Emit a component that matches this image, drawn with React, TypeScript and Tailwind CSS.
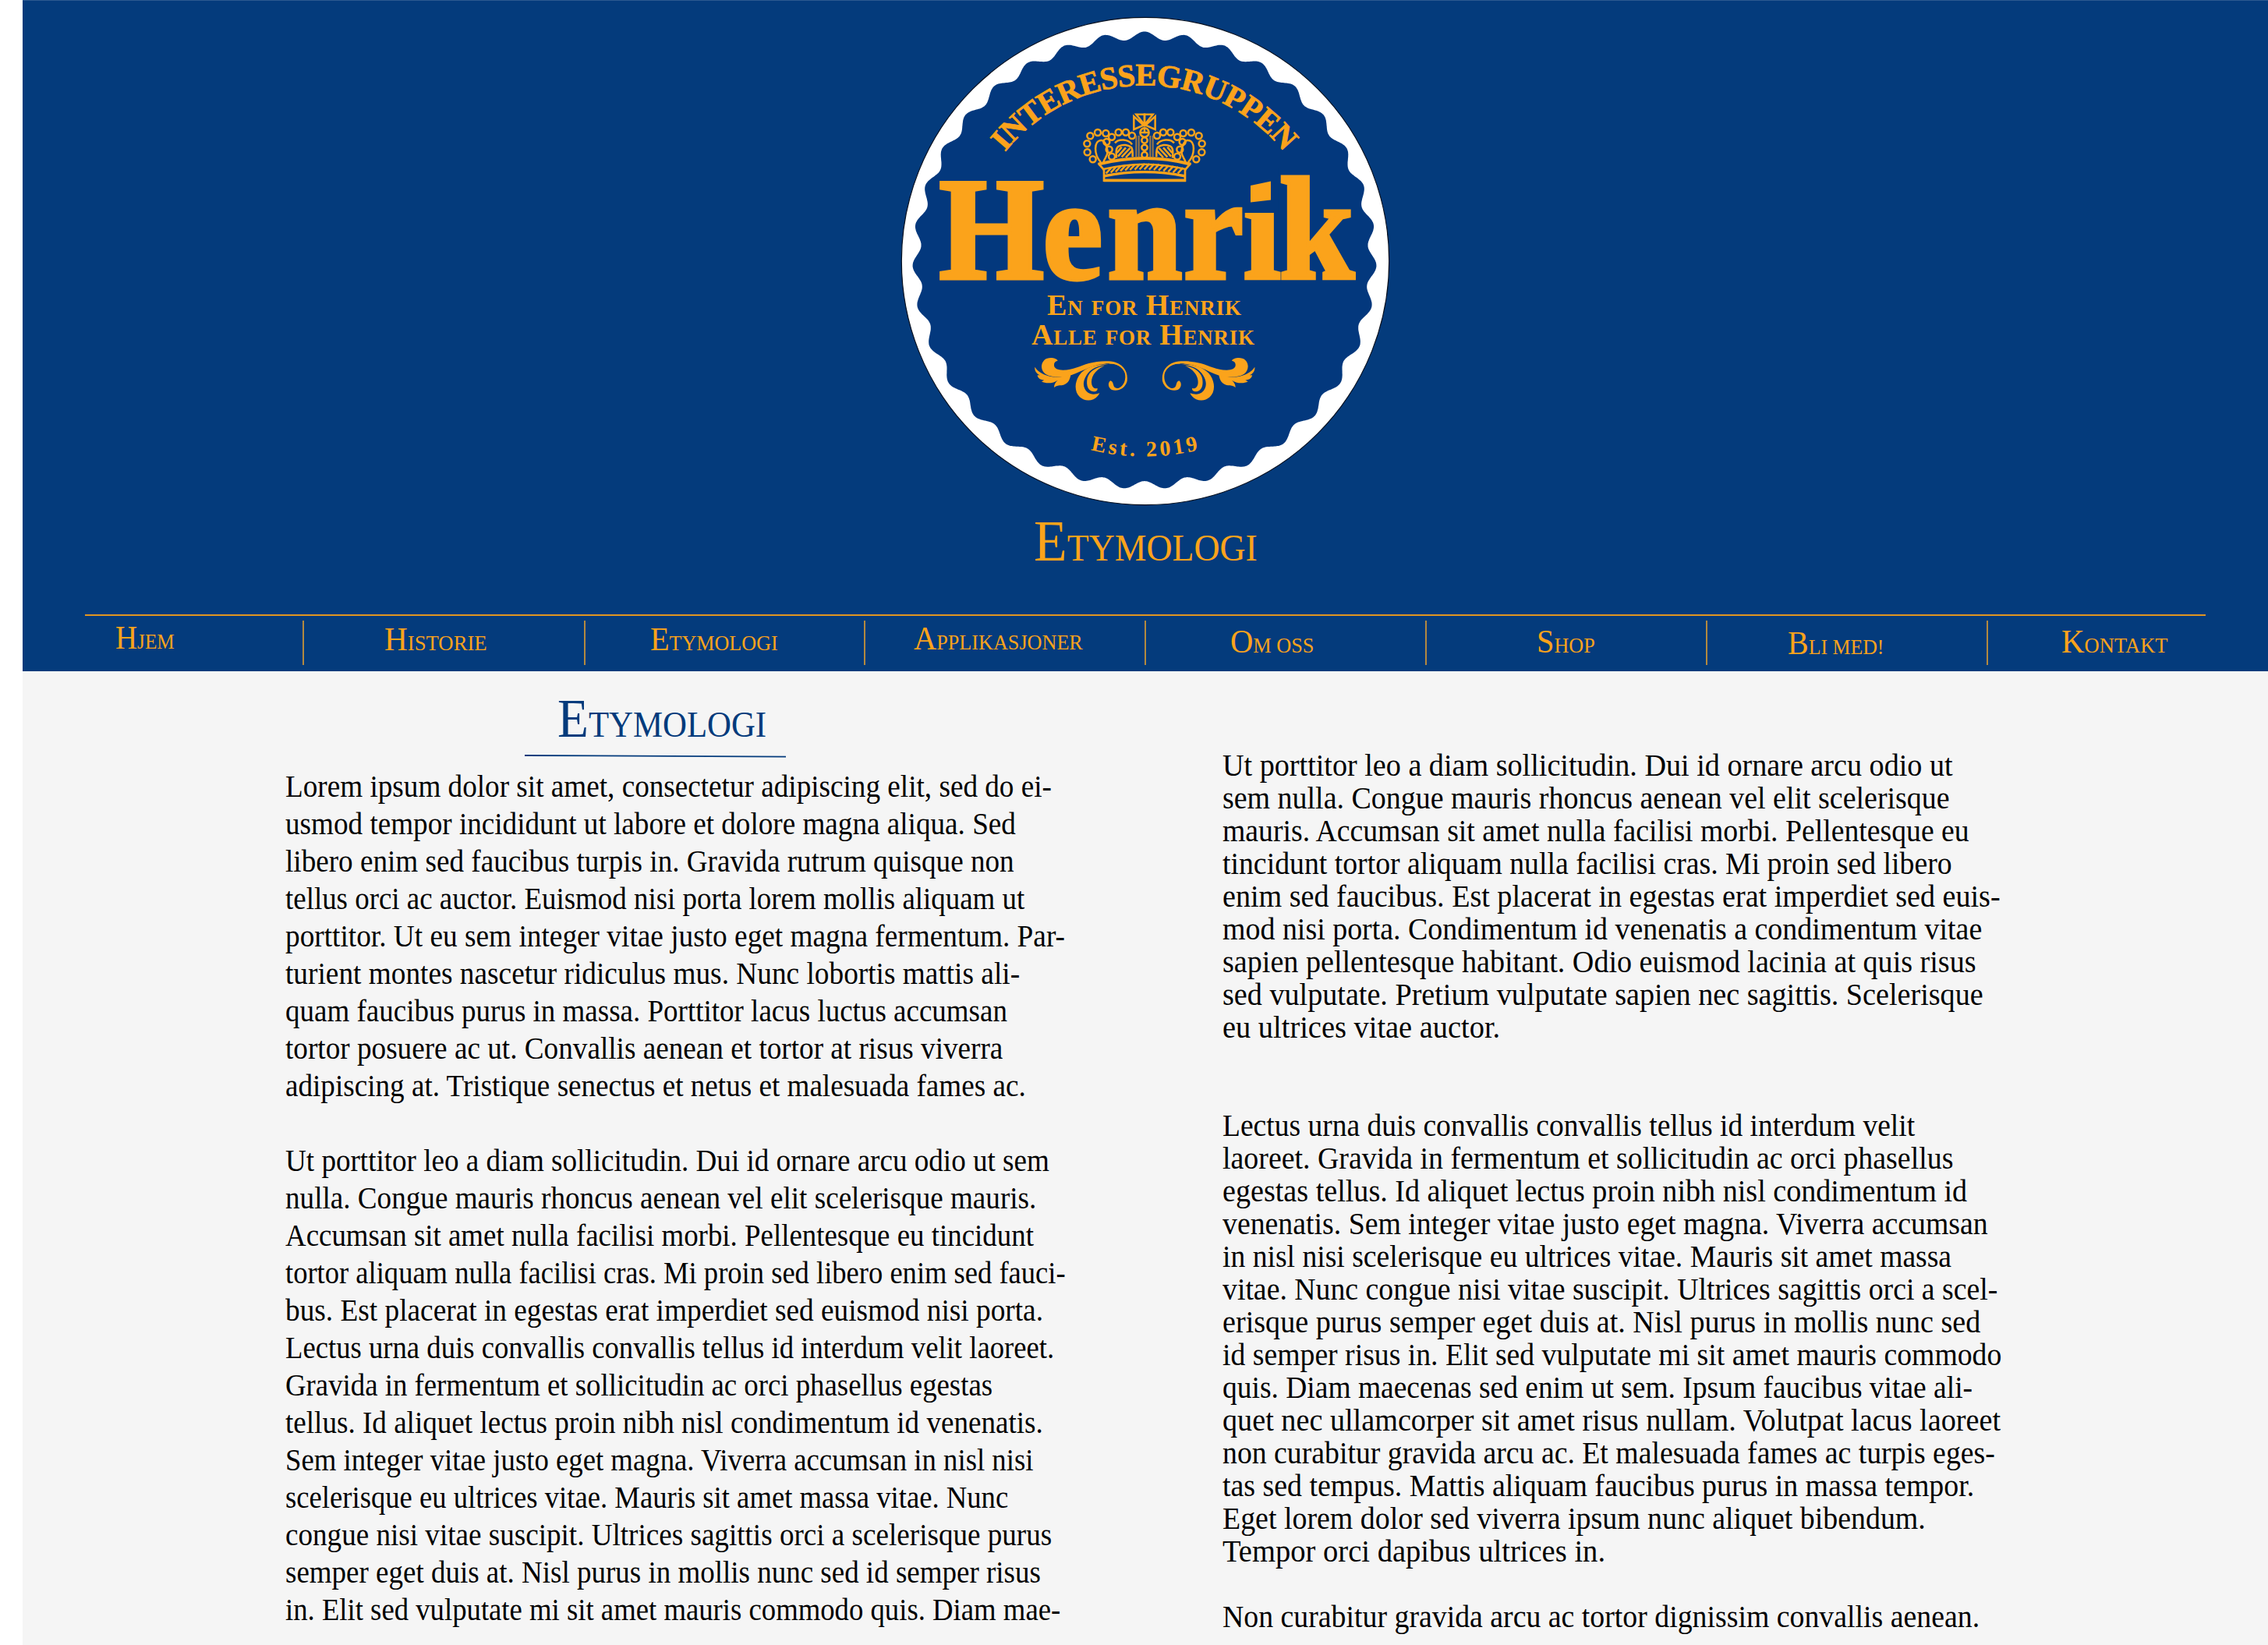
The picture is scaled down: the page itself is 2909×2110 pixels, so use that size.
import { useLayoutEffect, useRef, useState } from "react";

const ORANGE = "#fba31b";
const NAVY = "#03387d";

type FitProps = { text: string; width: number; className?: string };

/** One line of type, condensed or expanded to an exact measure. */
function Fit({ text, width, className = "" }: FitProps) {
  const ref = useRef<HTMLSpanElement>(null);
  const [scale, setScale] = useState(1);
  useLayoutEffect(() => {
    if (ref.current) setScale(width / ref.current.offsetWidth);
  }, [text, width]);
  return (
    <span
      ref={ref}
      className={`inline-block origin-left whitespace-pre ${className}`}
      style={{ transform: `scaleX(${scale})` }}
    >
      {text}
    </span>
  );
}

type Line = [string, number];

const leftColumn: Line[][] = [
  [
    ["Lorem ipsum dolor sit amet, consectetur adipiscing elit, sed do ei-", 983],
    ["usmod tempor incididunt ut labore et dolore magna aliqua. Sed", 937],
    ["libero enim sed faucibus turpis in. Gravida rutrum quisque non", 935],
    ["tellus orci ac auctor. Euismod nisi porta lorem mollis aliquam ut", 948],
    ["porttitor. Ut eu sem integer vitae justo eget magna fermentum. Par-", 1000],
    ["turient montes nascetur ridiculus mus. Nunc lobortis mattis ali-", 942],
    ["quam faucibus purus in massa. Porttitor lacus luctus accumsan", 926],
    ["tortor posuere ac ut. Convallis aenean et tortor at risus viverra", 920],
    ["adipiscing at. Tristique senectus et netus et malesuada fames ac.", 950],
  ],
  [
    ["Ut porttitor leo a diam sollicitudin. Dui id ornare arcu odio ut sem", 980],
    ["nulla. Congue mauris rhoncus aenean vel elit scelerisque mauris.", 963],
    ["Accumsan sit amet nulla facilisi morbi. Pellentesque eu tincidunt", 960],
    ["tortor aliquam nulla facilisi cras. Mi proin sed libero enim sed fauci-", 1001],
    ["bus. Est placerat in egestas erat imperdiet sed euismod nisi porta.", 972],
    ["Lectus urna duis convallis convallis tellus id interdum velit laoreet.", 986],
    ["Gravida in fermentum et sollicitudin ac orci phasellus egestas", 907],
    ["tellus. Id aliquet lectus proin nibh nisl condimentum id venenatis.", 972],
    ["Sem integer vitae justo eget magna. Viverra accumsan in nisl nisi", 959],
    ["scelerisque eu ultrices vitae. Mauris sit amet massa vitae. Nunc", 927],
    ["congue nisi vitae suscipit. Ultrices sagittis orci a scelerisque purus", 983],
    ["semper eget duis at. Nisl purus in mollis nunc sed id semper risus", 969],
    ["in. Elit sed vulputate mi sit amet mauris commodo quis. Diam mae-", 994],
  ],
];

const rightColumn: Line[][] = [
  [
    ["Ut porttitor leo a diam sollicitudin. Dui id ornare arcu odio ut", 937],
    ["sem nulla. Congue mauris rhoncus aenean vel elit scelerisque", 933],
    ["mauris. Accumsan sit amet nulla facilisi morbi. Pellentesque eu", 958],
    ["tincidunt tortor aliquam nulla facilisi cras. Mi proin sed libero", 936],
    ["enim sed faucibus. Est placerat in egestas erat imperdiet sed euis-", 998],
    ["mod nisi porta. Condimentum id venenatis a condimentum vitae", 974],
    ["sapien pellentesque habitant. Odio euismod lacinia at quis risus", 967],
    ["sed vulputate. Pretium vulputate sapien nec sagittis. Scelerisque", 976],
    ["eu ultrices vitae auctor.", 356],
  ],
  [
    ["Lectus urna duis convallis convallis tellus id interdum velit", 888],
    ["laoreet. Gravida in fermentum et sollicitudin ac orci phasellus", 937],
    ["egestas tellus. Id aliquet lectus proin nibh nisl condimentum id", 955],
    ["venenatis. Sem integer vitae justo eget magna. Viverra accumsan", 982],
    ["in nisl nisi scelerisque eu ultrices vitae. Mauris sit amet massa", 935],
    ["vitae. Nunc congue nisi vitae suscipit. Ultrices sagittis orci a scel-", 994],
    ["erisque purus semper eget duis at. Nisl purus in mollis nunc sed", 972],
    ["id semper risus in. Elit sed vulputate mi sit amet mauris commodo", 999],
    ["quis. Diam maecenas sed enim ut sem. Ipsum faucibus vitae ali-", 962],
    ["quet nec ullamcorper sit amet risus nullam. Volutpat lacus laoreet", 998],
    ["non curabitur gravida arcu ac. Et malesuada fames ac turpis eges-", 991],
    ["tas sed tempus. Mattis aliquam faucibus purus in massa tempor.", 964],
    ["Eget lorem dolor sed viverra ipsum nunc aliquet bibendum.", 902],
    ["Tempor orci dapibus ultrices in.", 491],
  ],
  [["Non curabitur gravida arcu ac tortor dignissim convallis aenean.", 971]],
];

function Column({ paragraphs, className }: { paragraphs: Line[][]; className: string }) {
  return (
    <div className={`flex flex-col ${className}`}>
      {paragraphs.map((lines, i) => (
        <p key={i}>
          {lines.map(([text, width]) => (
            <span key={text} className="block w-[1010px]">
              <Fit text={text} width={width} />
            </span>
          ))}
        </p>
      ))}
    </div>
  );
}

const navItems = [
  { label: "Hjem", width: 76, cell: "w-[279px] pl-[39px] pt-[1px]" },
  { label: "Historie", width: 132, cell: "w-[361px] border-l-2 pl-[103px] pt-[3px]" },
  { label: "Etymologi", width: 164, cell: "w-[359px] border-l-2 pl-[83px] pt-[3px]" },
  { label: "Applikasjoner", width: 217, cell: "w-[360px] border-l-2 pl-[62px] pt-[2px]" },
  { label: "Om oss", width: 107, cell: "w-[360px] border-l-2 pl-[108px] pt-[6px]" },
  { label: "Shop", width: 75, cell: "w-[360px] border-l-2 pl-[141px] pt-[6px]" },
  { label: "Bli med!", width: 123, cell: "w-[360px] border-l-2 pl-[103px] pt-[8px]" },
  { label: "Kontakt", width: 137, cell: "w-[280px] border-l-2 pl-[94px] pt-[6px]" },
];

/** Wavy bottle-cap edge with 35 bumps. */
function capEdge() {
  const points: string[] = [];
  for (let i = 0; i < 1440; i++) {
    const t = (i / 1440) * Math.PI * 2;
    const wave = 5.2 * Math.cos(35 * (t + 0.021 * Math.sin(t)));
    const x = 1468 + (292.3 + wave) * Math.sin(t);
    const y = 334 - (288.3 + wave) * Math.cos(t);
    points.push(`${x.toFixed(1)} ${y.toFixed(1)}`);
  }
  return `M${points.join("L")}Z`;
}

const pearls = [
  [95, 223], [74, 196], [73, 163], [85, 133], [114, 120], [145, 123], [168, 137],
  [194, 119], [222, 119], [246, 132], [148, 156], [158, 185], [168, 212],
];

function CrownHalf() {
  return (
    <g>
      {pearls.map(([x, y]) => (
        <circle key={`${x}-${y}`} cx={x} cy={y} r="12" fill={NAVY} />
      ))}
      <path d="M126 234C98 205 98 150 128 150C140 150 147 164 152 192C152 212 140 218 136 234" />
      <path d="M180 160C195 143 232 145 246 166M186 218C184 190 184 178 196 172C212 164 232 168 244 178C250 190 248 205 248 214" />
      <path d="M192 212L222 178M206 214L238 180M222 216L246 190M188 198L206 176" />
      <path d="M262 132V214M272 132V214" stroke="#a07a45" strokeWidth="6" />
      <path d="M262 50H294V90L262 50ZM253 58V108L290 92L253 58Z" />
    </g>
  );
}

function Crown() {
  return (
    <g transform="translate(1370 130) scale(.33333)" fill="none" stroke={ORANGE} strokeWidth="7.5">
      <CrownHalf />
      <g transform="translate(588 0) scale(-1 1)">
        <CrownHalf />
      </g>
      <circle cx="294" cy="120" r="17" fill={NAVY} />
      <path d="M277 120H311M294 103V124" />
      {[150, 178, 206].map((y) => (
        <circle key={y} cx="294" cy={y} r="11" fill={NAVY} />
      ))}
      <path d="M116 242Q294 196 472 242" strokeWidth="12" />
      <path d="M132 262Q294 222 456 262" />
      <path d="M136 288Q294 256 452 288" strokeWidth="10" />
      <path d="M116 238L138 264V309M472 238L450 264V309" strokeWidth="8" />
      {Array.from({ length: 16 }, (_, i) => {
        const x = 146 + i * 18.4;
        const y = 279 - 17 * Math.sin(((i + 0.5) / 16) * Math.PI);
        return <path key={i} d={`M${x} ${y}L${x + 20} ${y - 22}`} />;
      })}
      <path d="M137 304H453" strokeWidth="11" />
    </g>
  );
}

function Flourish() {
  return (
    <g fill={ORANGE}>
      <path d="M140 68C134 56 102 52 88 66C72 82 76 108 94 120C115 132 150 133 176 128C225 116 262 85 320 80C352 76 385 84 397 110C406 140 394 165 375 173C364 176 356 172 354 160C352 152 350 148 343 145C332 152 333 172 348 180C372 188 400 174 407 146C411 116 398 86 362 74C335 66 290 70 260 78C225 88 200 104 160 104C140 103 127 98 126 86C125 76 130 70 140 68Z" />
      <path d="M52 92C60 105 72 115 95 124C120 134 155 134 190 120C188 145 175 160 155 163C145 163 135 164 126 171C126 160 130 152 140 143C125 155 95 158 78 148L88 143C70 142 62 132 62 124L72 124C58 118 50 105 52 92Z" />
      <path d="M335 82C290 82 245 92 222 125C203 155 205 190 225 208C247 228 285 225 301 193C285 198 268 200 255 190C236 172 235 150 250 125C265 100 295 86 335 82Z" />
      <path d="M320 88C290 92 262 108 254 135C248 165 258 185 278 187C290 187 295 180 292 173C285 178 275 174 271 160C266 135 280 105 320 88Z" />
      <path d="M340 80C360 78 384 88 396 110L402 120C396 92 374 74 340 72Z" />
    </g>
  );
}

function Logo() {
  return (
    <svg className="h-[660px] w-[660px]" viewBox="1139 0 660 660" fontFamily="Liberation Serif, serif" fontWeight="700">
      <defs>
        <path id="arc-top" d="M1238.5 339A229.5 229.5 0 0 1 1697.5 339" />
        <path id="arc-bottom" d="M1175 292.5A293 293 0 0 0 1761 292.5" />
      </defs>
      <circle cx="1469" cy="335" r="312.7" fill="#fff" stroke="#06101f" strokeWidth="1.2" />
      <path d={capEdge()} fill={NAVY} />
      <g fill={ORANGE}>
        <text fontSize="40.5" textAnchor="middle" stroke={ORANGE} strokeWidth=".8">
          <textPath href="#arc-top" startOffset="50%" textLength="410">INTERESSEGRUPPEN</textPath>
        </text>
        <text
          transform="translate(1204.5 356.5) scale(.93 1)"
          x="0 143 232 337 419.5 469"
          fontSize="186"
          stroke={ORANGE}
          strokeWidth="5"
        >
          Henrik
        </text>
        {/* slanted tittle in place of the round one */}
        <path d="M1594 215H1639.5V273H1594Z" fill={NAVY} />
        <path d="M1604 238L1630 232.5V256.5L1604 259.5Z" />
        <text x="1343" y="403.5" fontSize="38" textLength="249" style={{ fontVariant: "small-caps" }}>
          En for Henrik
        </text>
        <text x="1323" y="441.5" fontSize="38" textLength="286" style={{ fontVariant: "small-caps" }}>
          Alle for Henrik
        </text>
        <text fontSize="28" textAnchor="middle">
          <textPath href="#arc-bottom" startOffset="50%" textLength="140">Est. 2019</textPath>
        </text>
      </g>
      <Crown />
      <g transform="translate(1310 440) scale(.33333)">
        <Flourish />
        <g transform="translate(950 0) scale(-1 1)">
          <Flourish />
        </g>
      </g>
    </svg>
  );
}

export default function App() {
  return (
    <div className="h-[2110px] w-full overflow-hidden bg-white pl-[29px] font-['Liberation_Serif',serif]">
      <div className="flex h-full flex-col bg-[#f5f5f5]">
        <header className="flex h-[861px] shrink-0 flex-col border-t border-[#2c5a90] bg-[#043b7c] text-[#fba31b]">
          <div className="-mt-px flex justify-center">
            <Logo />
          </div>
          <h1 className="-mt-[3px] ml-[1297px] h-[131px] w-[285px] text-[48.5px] leading-[90px] uppercase">
            <Fit text="Etymologi" width={287} className="first-letter:text-[74px] first-letter:leading-none" />
          </h1>
          <nav className="ml-[80px] flex h-[66px] w-[2720px] border-t-2 border-[#e2961f] pt-[6px]">
            {navItems.map((item) => (
              <a key={item.label} className={`h-[57px] shrink-0 border-[#b3893f] text-[27.5px] leading-[48px] uppercase ${item.cell}`}>
                <Fit text={item.label} width={item.width} className="first-letter:text-[42.5px] first-letter:leading-none" />
              </a>
            ))}
          </nav>
        </header>
        <main className="flex text-[41px] text-black">
          <section className="ml-[337px] w-[1202px]">
            <h2 className="ml-[349px] h-[106px] pt-[24px] text-[45.5px] leading-[90px] text-[#043b7c] uppercase">
              <Fit text="Etymologi" width={268} className="first-letter:text-[69.5px] first-letter:leading-none" />
            </h2>
            <svg className="ml-[307px] h-[6px] w-[336px]" viewBox="0 0 336 6">
              <path d="M0 2L335 3.6" stroke="#043b7c" strokeWidth="1.8" />
            </svg>
            <Column paragraphs={leftColumn} className="mt-[11px] gap-[48px] leading-[48px]" />
          </section>
          <section className="pt-[99px]">
            <Column paragraphs={rightColumn.slice(0, 1)} className="leading-[42px]" />
            <Column paragraphs={rightColumn.slice(1)} className="mt-[84px] gap-[42px] leading-[42px]" />
          </section>
        </main>
      </div>
    </div>
  );
}
